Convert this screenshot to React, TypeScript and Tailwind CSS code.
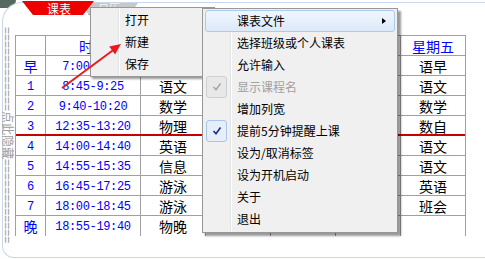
import React from "react";

const rows: { n: string; t: string; c: string[] }[] = [
  { n: "早", t: "7:00-7:40", c: ["", "", "", "", "语早"] },
  { n: "1", t: "8:45-9:25", c: ["语文", "", "", "", "语文"] },
  { n: "2", t: "9:40-10:20", c: ["数学", "", "", "", "数学"] },
  { n: "3", t: "12:35-13:20", c: ["物理", "", "", "", "数自"] },
  { n: "4", t: "14:00-14:40", c: ["英语", "", "", "", "语文"] },
  { n: "5", t: "14:55-15:35", c: ["信息", "", "", "", "语文"] },
  { n: "6", t: "16:45-17:25", c: ["游泳", "", "", "", "英语"] },
  { n: "7", t: "18:00-18:45", c: ["游泳", "", "", "", "班会"] },
  { n: "晚", t: "18:55-19:40", c: ["物晚", "", "", "", ""] },
];

const header = ["", "", "", "", "星期五"];

function Check({ color }: { color: string }) {
  return (
    <svg width="10" height="10" viewBox="0 0 10 10">
      <polyline points="1.5,5 4,7.8 8.5,1.5" fill="none" stroke={color} strokeWidth="1.6" />
    </svg>
  );
}

const menu2: { label: string; disabled?: boolean; check?: "on" | "off"; sub?: boolean; hover?: boolean }[] = [
  { label: "课表文件", sub: true, hover: true },
  { label: "选择班级或个人课表" },
  { label: "允许输入" },
  { label: "显示课程名", disabled: true, check: "off" },
  { label: "增加列宽" },
  { label: "提前5分钟提醒上课", check: "on" },
  { label: "设为/取消标签" },
  { label: "设为开机启动" },
  { label: "关于" },
  { label: "退出" },
];

export default function App() {
  return (
    <div className="relative w-[485px] h-[259px] overflow-hidden bg-white font-['Noto_Sans_CJK_SC',sans-serif]">
      <div className="absolute left-0 top-0 w-[16px] h-[8px] bg-[#56695f] rounded-br-[8px]" />
      {/* window */}
      <div className="relative ml-[2px] mt-[2px] w-[500px] h-[256px] border border-r-0 border-[#c6d7ee] rounded-tl-[20px] rounded-bl-[12px] bg-white">
        {/* tabs */}
        <div className="flex items-start -mt-[3px] ml-[19px] h-[15px]">
          <div className="relative z-10 mt-[1px] w-[72px] h-[14px] bg-[#ee0000] [clip-path:polygon(0_0,100%_0,calc(100%_-_11px)_100%,11px_100%)] flex items-center justify-center pl-[2px] text-white text-[12px] leading-[13px]">
            课表
          </div>
          <div className="-ml-[14px] mt-[3px] w-[58px] h-[12px] bg-[#c8c8c8] border-b border-[#8c8c8c] [clip-path:polygon(0_0,100%_0,calc(100%_-_9px)_100%,9px_100%)] flex items-center justify-center text-[#f4f4f4] text-[11px] leading-[11px]">
            日历
          </div>
        </div>
        {/* main */}
        <div className="flex mt-[20px]">
          <div className="-ml-[2px] mr-[2px] w-[12px] h-[201px] flex items-center justify-center">
            <span className="whitespace-nowrap [writing-mode:vertical-rl] [text-orientation:sideways] text-[#9c9c9c] text-[12px] leading-[12px] font-['Liberation_Sans','Noto_Sans_CJK_SC',sans-serif]">
              ============点此隐藏============
            </span>
          </div>
          <div className="flex flex-col border border-[#a0a0a0] w-[451px]">
            <div className="grid grid-cols-[29px_94px_64px_64px_64px_64px_64px] gap-x-px bg-[#a0a0a0] h-[19px]">
              <div className="bg-white" />
              <div className="bg-white flex items-center justify-center text-[#0000ff] text-[14px]">时间</div>
              {header.map((h, k) => (
                <div key={k} className="bg-white flex items-center justify-center text-[#0000ff] text-[14px]">{h}</div>
              ))}
            </div>
            {rows.map((r, i) => (
              <React.Fragment key={r.n}>
                {i === 4 ? (
                  <div className="h-[2px] bg-[#c80000]" />
                ) : (
                  <div className="h-px bg-[#a0a0a0]" />
                )}
                <div className={`grid grid-cols-[29px_94px_64px_64px_64px_64px_64px] gap-x-px bg-[#a0a0a0] ${i === 3 ? "h-[18px]" : "h-[19px]"}`}>
                  <div className={`bg-white flex items-center justify-center text-[#0000ff] ${/\d/.test(r.n) ? "font-['Liberation_Mono',monospace] text-[12px]" : "text-[14px]"}`}>{r.n}</div>
                  <div className="bg-white flex items-center justify-center text-[#0000ff] font-['Liberation_Mono',monospace] text-[12px] tracking-[-0.35px]">{r.t}</div>
                  {r.c.map((c, j) => (
                    <div key={j} className="bg-white flex items-center justify-center text-black text-[14px]">{c}</div>
                  ))}
                </div>
              </React.Fragment>
            ))}
          </div>
        </div>
      </div>

      {/* menu 1 */}
      <div className="absolute left-[90px] top-[7px] w-[125px] h-[70px] bg-[#f0f0f0] border border-[#979797] shadow-[2px_2px_2px_rgba(0,0,0,0.4)] pt-[1px] text-[12px] text-black">
        <div className="absolute left-[27px] top-[1px] bottom-[1px] w-[2px] border-l border-[#e2e3e3] bg-white" />
        {["打开", "新建", "保存"].map((m) => (
          <div key={m} className="relative h-[22px] flex items-center pl-[34px]">{m}</div>
        ))}
      </div>

      {/* menu 2 */}
      <div className="absolute left-[202px] top-[8px] w-[196px] h-[225px] bg-[#f0f0f0] border border-[#979797] shadow-[3px_3px_2px_rgba(0,0,0,0.4)] pt-[1px] text-[12px] text-black">
        <div className="absolute left-[27px] top-[1px] bottom-[1px] w-[2px] border-l border-[#e2e3e3] bg-white" />
        {menu2.map((m) => (
          <div key={m.label} className="relative h-[22px] mx-[2px]">
            {m.hover && (
              <div className="absolute inset-0 rounded-[3px] border border-[#aacbf0] bg-gradient-to-b from-[#f0f6fe] to-[#dde9f8]" />
            )}
            {m.check && (
              <div
                className={`absolute left-[1px] top-0 w-[21px] h-[22px] rounded-[3px] border flex items-center justify-center ${
                  m.check === "on" ? "border-[#a8c6ea] bg-[#e6eefa]" : "border-[#cfcfcf] bg-[#e8e8e8]"
                }`}
              >
                <Check color={m.check === "on" ? "#1a2a96" : "#a8a8a8"} />
              </div>
            )}
            <div className={`relative h-full flex items-center pl-[32px] ${m.disabled ? "text-[#a0a0a0]" : "text-black"}`}>
              {m.label}
            </div>
            {m.sub && (
              <div className="absolute right-[9px] top-[8px] w-0 h-0 border-y-[3.5px] border-y-transparent border-l-[4px] border-l-black" />
            )}
          </div>
        ))}
      </div>

      {/* red arrow */}
      <svg className="absolute left-0 top-0 pointer-events-none" width="485" height="259">
        <line x1="62" y1="88" x2="114" y2="49.5" stroke="#e81c1c" strokeWidth="2" />
        <polygon points="121,44 115.1,54.5 109.2,46.5" fill="#e81c1c" />
      </svg>
    </div>
  );
}
